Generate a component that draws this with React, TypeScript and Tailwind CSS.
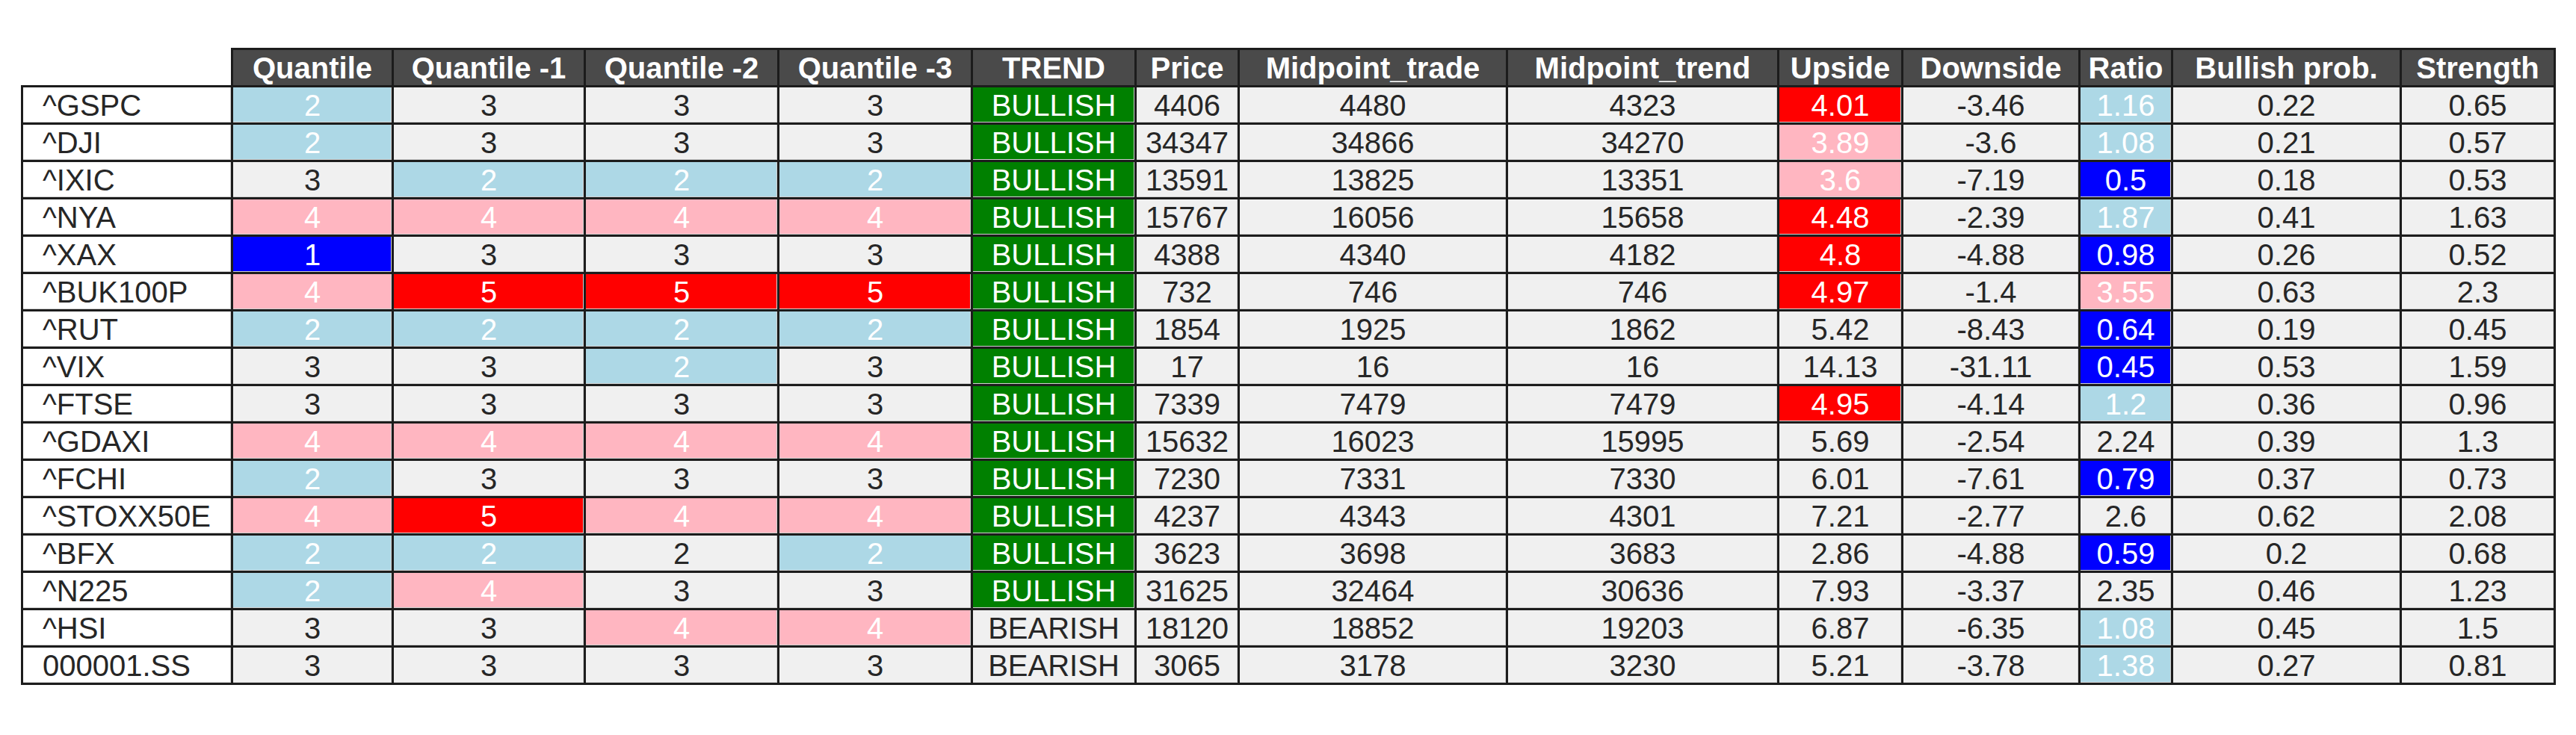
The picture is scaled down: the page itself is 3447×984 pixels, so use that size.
type Tone = 'plain' | 'lb' | 'pink' | 'red' | 'blue' | 'green';

type Cell = [string | number, Tone?];

const columns = [
  { label: 'Quantile', width: 'w-[215px]' },
  { label: 'Quantile -1', width: 'w-[257px]' },
  { label: 'Quantile -2', width: 'w-[259px]' },
  { label: 'Quantile -3', width: 'w-[259px]' },
  { label: 'TREND', width: 'w-[219px]' },
  { label: 'Price', width: 'w-[138px]' },
  { label: 'Midpoint_trade', width: 'w-[359px]' },
  { label: 'Midpoint_trend', width: 'w-[363px]' },
  { label: 'Upside', width: 'w-[166px]' },
  { label: 'Downside', width: 'w-[237px]' },
  { label: 'Ratio', width: 'w-[124px]' },
  { label: 'Bullish prob.', width: 'w-[306px]' },
  { label: 'Strength', width: 'w-[206px]' },
];

const toneClass: Record<Tone, string> = {
  plain: 'bg-[#f0f0f0] text-[#262626]',
  lb: 'bg-[#add8e6] text-white',
  pink: 'bg-[#ffb6c1] text-white',
  red: 'bg-[#ff0000] text-white',
  blue: 'bg-[#0000ff] text-white',
  green: 'bg-[#008000] text-white',
};

const bull: Cell = ['BULLISH', 'green'];
const bear: Cell = ['BEARISH'];

const rows: { name: string; cells: Cell[] }[] = [
  { name: '^GSPC', cells: [[2, 'lb'], [3], [3], [3], bull, [4406], [4480], [4323], [4.01, 'red'], [-3.46], [1.16, 'lb'], [0.22], [0.65]] },
  { name: '^DJI', cells: [[2, 'lb'], [3], [3], [3], bull, [34347], [34866], [34270], [3.89, 'pink'], [-3.6], [1.08, 'lb'], [0.21], [0.57]] },
  { name: '^IXIC', cells: [[3], [2, 'lb'], [2, 'lb'], [2, 'lb'], bull, [13591], [13825], [13351], [3.6, 'pink'], [-7.19], [0.5, 'blue'], [0.18], [0.53]] },
  { name: '^NYA', cells: [[4, 'pink'], [4, 'pink'], [4, 'pink'], [4, 'pink'], bull, [15767], [16056], [15658], [4.48, 'red'], [-2.39], [1.87, 'lb'], [0.41], [1.63]] },
  { name: '^XAX', cells: [[1, 'blue'], [3], [3], [3], bull, [4388], [4340], [4182], [4.8, 'red'], [-4.88], [0.98, 'blue'], [0.26], [0.52]] },
  { name: '^BUK100P', cells: [[4, 'pink'], [5, 'red'], [5, 'red'], [5, 'red'], bull, [732], [746], [746], [4.97, 'red'], [-1.4], [3.55, 'pink'], [0.63], [2.3]] },
  { name: '^RUT', cells: [[2, 'lb'], [2, 'lb'], [2, 'lb'], [2, 'lb'], bull, [1854], [1925], [1862], [5.42], [-8.43], [0.64, 'blue'], [0.19], [0.45]] },
  { name: '^VIX', cells: [[3], [3], [2, 'lb'], [3], bull, [17], [16], [16], [14.13], [-31.11], [0.45, 'blue'], [0.53], [1.59]] },
  { name: '^FTSE', cells: [[3], [3], [3], [3], bull, [7339], [7479], [7479], [4.95, 'red'], [-4.14], [1.2, 'lb'], [0.36], [0.96]] },
  { name: '^GDAXI', cells: [[4, 'pink'], [4, 'pink'], [4, 'pink'], [4, 'pink'], bull, [15632], [16023], [15995], [5.69], [-2.54], [2.24], [0.39], [1.3]] },
  { name: '^FCHI', cells: [[2, 'lb'], [3], [3], [3], bull, [7230], [7331], [7330], [6.01], [-7.61], [0.79, 'blue'], [0.37], [0.73]] },
  { name: '^STOXX50E', cells: [[4, 'pink'], [5, 'red'], [4, 'pink'], [4, 'pink'], bull, [4237], [4343], [4301], [7.21], [-2.77], [2.6], [0.62], [2.08]] },
  { name: '^BFX', cells: [[2, 'lb'], [2, 'lb'], [2], [2, 'lb'], bull, [3623], [3698], [3683], [2.86], [-4.88], [0.59, 'blue'], [0.2], [0.68]] },
  { name: '^N225', cells: [[2, 'lb'], [4, 'pink'], [3], [3], bull, [31625], [32464], [30636], [7.93], [-3.37], [2.35], [0.46], [1.23]] },
  { name: '^HSI', cells: [[3], [3], [4, 'pink'], [4, 'pink'], bear, [18120], [18852], [19203], [6.87], [-6.35], [1.08, 'lb'], [0.45], [1.5]] },
  { name: '000001.SS', cells: [[3], [3], [3], [3], bear, [3065], [3178], [3230], [5.21], [-3.78], [1.38, 'lb'], [0.27], [0.81]] },
];

export default function App() {
  return (
    <div className="w-[3447px] h-[984px] bg-white font-['Liberation_Sans',Arial,sans-serif] pt-[64px] pl-[28px]">
      <table className="table-fixed border-collapse w-[3391px] text-[40px] leading-none">
        <colgroup>
          <col className="w-[281px]" />
          {columns.map((c) => (
            <col key={c.label} className={c.width} />
          ))}
        </colgroup>
        <thead>
          <tr className="h-[50px]">
            <th className="border-0 bg-white" />
            {columns.map((c) => (
              <th
                key={c.label}
                className="border-[3px] border-[#1c1c1c] bg-[#4a4a4a] text-white font-bold text-center p-0 whitespace-nowrap"
              >
                {c.label}
              </th>
            ))}
          </tr>
        </thead>
        <tbody>
          {rows.map((r) => (
            <tr key={r.name} className="h-[50px]">
              <td className="border-[3px] border-[#1c1c1c] bg-white text-[#262626] text-left pl-[26px] p-0 shadow-[inset_-1px_-1px_0_#d2d2d2]">
                {r.name}
              </td>
              {r.cells.map(([v, tone], i) => (
                <td
                  key={i}
                  className={`border-[3px] border-[#1c1c1c] text-center p-0 whitespace-nowrap shadow-[inset_-1px_-1px_0_#d2d2d2] ${toneClass[tone ?? 'plain']}`}
                >
                  {v}
                </td>
              ))}
            </tr>
          ))}
        </tbody>
      </table>
    </div>
  );
}
